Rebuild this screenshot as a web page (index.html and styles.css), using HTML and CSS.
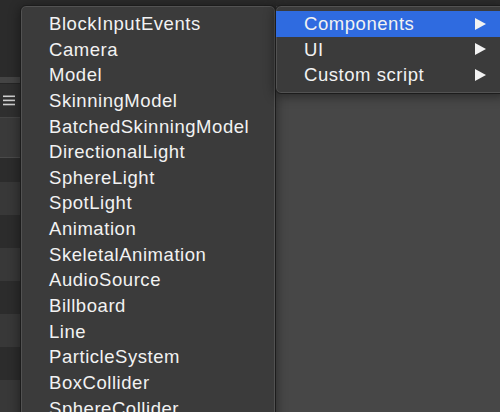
FILE: index.html
```html
<!DOCTYPE html>
<html>
<head>
<meta charset="utf-8">
<link rel="stylesheet" href="styles.css">
</head>
<body>
<div class="app">
  <aside class="sidebar">
    <div class="sb-top"></div>
    <div class="sb-divider"></div>
    <div class="sb-toolbar">
      <svg class="hamburger" width="12" height="11" viewBox="0 0 12 11">
        <rect x="0" y="0.5" width="12" height="1.6" fill="#d0d0d0"/>
        <rect x="0" y="4.6" width="12" height="1.6" fill="#d0d0d0"/>
        <rect x="0" y="8.7" width="12" height="1.6" fill="#d0d0d0"/>
      </svg>
    </div>
    <div class="sb-search"></div>
    <div class="sb-row dark first"></div>
    <div class="sb-row light"></div>
    <div class="sb-row dark"></div>
    <div class="sb-row light"></div>
    <div class="sb-row dark"></div>
    <div class="sb-row light"></div>
    <div class="sb-row dark"></div>
    <div class="sb-row light"></div>
  </aside>
  <main class="panel-wrap">
    <div class="panel"></div>
  </main>
</div>

<ul class="menu submenu">
  <li>BlockInputEvents</li>
  <li>Camera</li>
  <li>Model</li>
  <li>SkinningModel</li>
  <li>BatchedSkinningModel</li>
  <li>DirectionalLight</li>
  <li>SphereLight</li>
  <li>SpotLight</li>
  <li>Animation</li>
  <li>SkeletalAnimation</li>
  <li>AudioSource</li>
  <li>Billboard</li>
  <li>Line</li>
  <li>ParticleSystem</li>
  <li>BoxCollider</li>
  <li>SphereCollider</li>
</ul>

<ul class="menu mainmenu">
  <li class="active"><span>Components</span><span class="arrow"></span></li>
  <li><span>UI</span><span class="arrow"></span></li>
  <li><span>Custom script</span><span class="arrow"></span></li>
</ul>
</body>
</html>
```

FILE: styles.css
```css
html, body {
  margin: 0;
  padding: 0;
}
body {
  width: 500px;
  height: 412px;
  overflow: hidden;
  background: #2c2c2c;
  position: relative;
  font-family: "Liberation Sans", Arial, sans-serif;
}
.app {
  display: grid;
  grid-template-columns: 276px 1fr;
  height: 412px;
}
.sidebar {
  display: flex;
  flex-direction: column;
  background: #2c2c2c;
}
.sb-top {
  height: 77px;
  background: #2b2b2b;
}
.sb-divider {
  height: 6px;
  background: #444;
  border-bottom: 1px solid #262626;
}
.sb-toolbar {
  height: 33px;
  background: #2f2f2f;
  border-bottom: 1px solid #454545;
  display: flex;
  align-items: center;
  padding-left: 3px;
}
.sb-search {
  height: 39px;
  background: #3a3a3a;
  border-bottom: 1px solid #4a4a4a;
}
.sb-row {
  height: 33px;
  flex: none;
}
.sb-row.first {
  height: 24px;
}
.sb-row.dark { background: #2c2c2c; }
.sb-row.light { background: #383838; }

.panel-wrap {
  display: flex;
  flex-direction: column;
  padding-top: 6px;
  background: #2c2c2c;
}
.panel {
  flex: 1;
  background: #474747;
}

.menu {
  list-style: none;
  margin: 0;
  position: absolute;
  background: #3b3b3b;
  border: 1px solid #1c1c1c;
  box-shadow: inset 0 0 0 1px #525252, 0 2px 12px rgba(0,0,0,0.45);
  color: #f2f2f2;
  font-size: 18.5px;
  letter-spacing: 0.55px;
}
.menu li {
  height: 25.65px;
  line-height: 25.65px;
  white-space: nowrap;
}
.submenu {
  left: 20px;
  top: 5px;
  width: 256px;
  height: 430px;
  padding: 5px 0 0 28px;
  box-sizing: border-box;
  border-radius: 6px 6px 0 0;
}
.mainmenu {
  left: 275px;
  top: 5px;
  width: 232px;
  padding: 5px 0;
  box-sizing: border-box;
  border-radius: 6px;
}
.mainmenu li {
  display: flex;
  justify-content: space-between;
  align-items: center;
  padding: 0 20px 0 28px;
}
.mainmenu li.active {
  background: #2f6be0;
}
.arrow {
  width: 0;
  height: 0;
  border-top: 6px solid transparent;
  border-bottom: 6px solid transparent;
  border-left: 11px solid #f2f2f2;
}
```
